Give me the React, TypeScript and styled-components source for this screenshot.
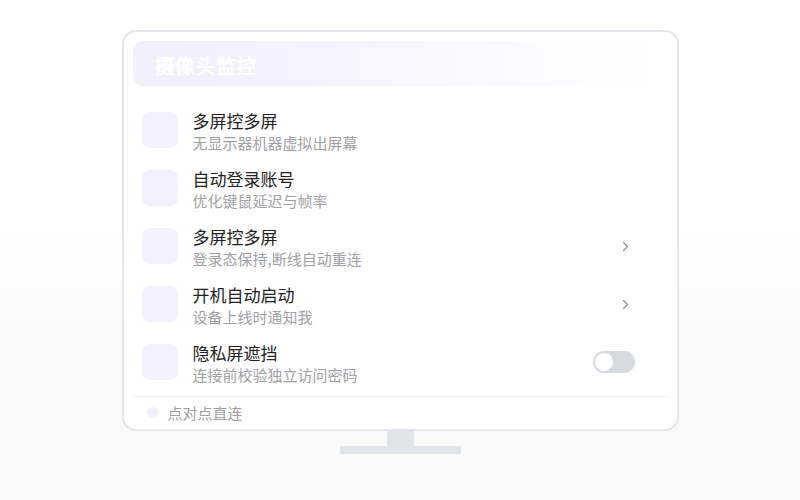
import React from "react";
import styled, { createGlobalStyle } from "styled-components";

const GlobalStyle = createGlobalStyle`
  html, body {
    margin: 0;
    padding: 0;
  }
  body {
    width: 800px;
    height: 500px;
    overflow: hidden;
    background: linear-gradient(180deg, #ffffff 0%, #ffffff 45%, #fafafb 65%, #fafafa 100%);
    font-family: "Noto Sans CJK SC", "Noto Sans", sans-serif;
  }
`;

const Page = styled.div`
  display: flex;
  flex-direction: column;
  align-items: center;
  padding-top: 30px;
`;

const Screen = styled.div`
  box-sizing: border-box;
  width: 557px;
  height: 401px;
  padding: 9px 9px 0;
  border: 2px solid #e3e5ea;
  border-radius: 14px;
  background: #ffffff;
  display: flex;
  flex-direction: column;
`;

const Banner = styled.div`
  height: 45px;
  width: 517px;
  display: flex;
  align-items: center;
  padding: 3px 0 0 22px;
  box-sizing: border-box;
  border-radius: 10px;
  background: linear-gradient(90deg, #f2effe 0%, #f6f4ff 45%, #fcfbff 80%, rgba(255, 255, 255, 0) 100%);
  color: #ffffff;
  font-size: 20px;
  font-weight: 700;
  letter-spacing: 0.5px;
`;

const List = styled.div`
  display: flex;
  flex-direction: column;
  margin-top: 15px;
`;

const Row = styled.div`
  height: 58px;
  display: flex;
  align-items: center;
  padding: 0 33px 0 9px;
`;

const IconBox = styled.div`
  width: 36px;
  height: 36px;
  border-radius: 8px;
  background: #f3f0ff;
  flex-shrink: 0;
`;

const Texts = styled.div`
  flex: 1;
  margin-left: 15px;
  display: flex;
  flex-direction: column;
  padding-top: 3px;
`;

const Title = styled.div`
  font-size: 17px;
  line-height: 22px;
  color: #222222;
`;

const Sub = styled.div`
  font-size: 15px;
  line-height: 21px;
  color: #a0a0a4;
`;

const Chevron = styled.svg`
  width: 7px;
  height: 11px;
  margin-right: 6px;
`;

const Switch = styled.div<{ $on?: boolean }>`
  position: relative;
  width: 42px;
  height: 22px;
  border-radius: 11px;
  background: ${(p) => (p.$on ? "#8b7cf6" : "#d6d9e0")};
  box-sizing: border-box;
`;

const Knob = styled.span`
  position: absolute;
  top: 1px;
  left: 1px;
  width: 20px;
  height: 20px;
  box-sizing: border-box;
  border-radius: 50%;
  background: #ffffff;
  border: 1px solid #d6d9e0;
`;

const Divider = styled.div`
  height: 1px;
  background: #eceef2;
  margin-top: 5px;
`;

const Footer = styled.div`
  flex: 1;
  display: flex;
  align-items: center;
  padding-left: 14px;
  padding-bottom: 2px;
  gap: 10px;
  font-size: 15px;
  color: #a0a0a4;
`;

const Dot = styled.span`
  width: 11px;
  height: 11px;
  border-radius: 50%;
  background: #f1eefd;
`;

const Neck = styled.div`
  width: 27px;
  height: 15px;
  background: #e0e3e7;
`;

const Base = styled.div`
  width: 121px;
  height: 8px;
  background: #e0e3e7;
`;

type Item = {
  title: string;
  sub: string;
  action?: "chevron" | "switch";
};

const items: Item[] = [
  { title: "多屏控多屏", sub: "无显示器机器虚拟出屏幕" },
  { title: "自动登录账号", sub: "优化键鼠延迟与帧率" },
  { title: "多屏控多屏", sub: "登录态保持,断线自动重连", action: "chevron" },
  { title: "开机自动启动", sub: "设备上线时通知我", action: "chevron" },
  { title: "隐私屏遮挡", sub: "连接前校验独立访问密码", action: "switch" },
];

const App: React.FC = () => {
  return (
    <>
      <GlobalStyle />
      <Page>
        <Screen>
          <Banner>摄像头监控</Banner>
          <List>
            {items.map((item, i) => (
              <Row key={i}>
                <IconBox />
                <Texts>
                  <Title>{item.title}</Title>
                  <Sub>{item.sub}</Sub>
                </Texts>
                {item.action === "chevron" && (
                  <Chevron viewBox="0 0 7 11">
                    <path
                      d="M1.5 1.5 L5.5 5.5 L1.5 9.5"
                      fill="none"
                      stroke="#8c909a"
                      strokeWidth="1.3"
                      strokeLinecap="round"
                      strokeLinejoin="round"
                    />
                  </Chevron>
                )}
                {item.action === "switch" && (
                  <Switch>
                    <Knob />
                  </Switch>
                )}
              </Row>
            ))}
          </List>
          <Divider />
          <Footer>
            <Dot />
            点对点直连
          </Footer>
        </Screen>
        <Neck />
        <Base />
      </Page>
    </>
  );
};

export default App;
